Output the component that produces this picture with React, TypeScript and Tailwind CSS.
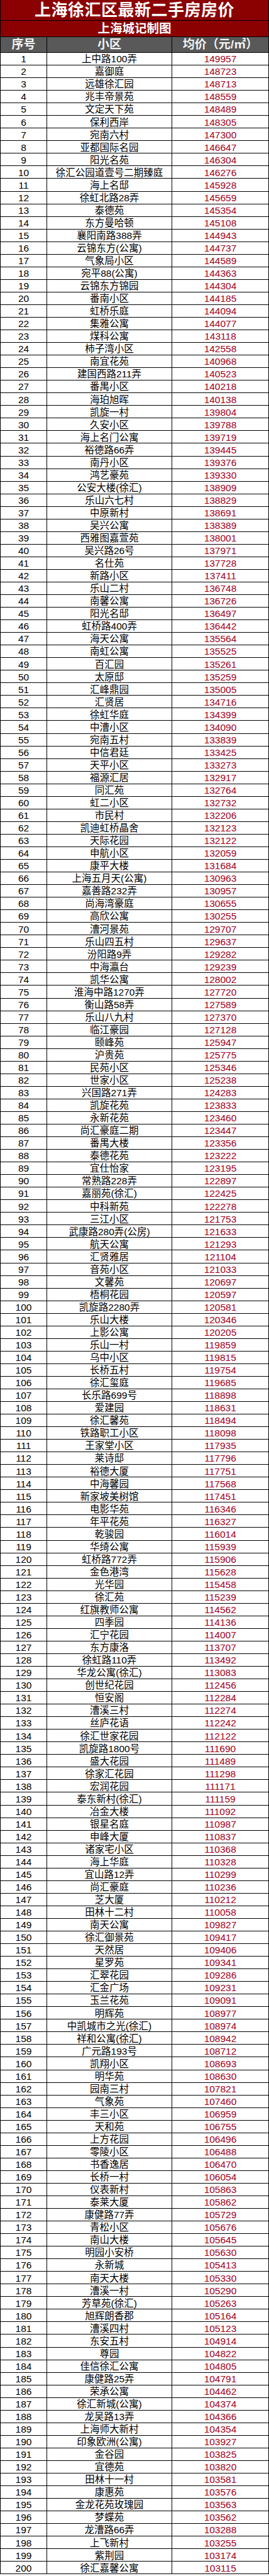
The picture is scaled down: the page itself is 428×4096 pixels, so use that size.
const RAW = `上中路100弄|149957
嘉御庭|148723
远雄徐汇园|148713
兆丰帝景苑|148559
文定天下苑|148489
保利西岸|148305
宛南六村|147300
亚都国际名园|146647
阳光名苑|146304
徐汇公园道壹号二期臻庭|146276
海上名邸|145928
徐虹北路28弄|145659
泰德苑|145354
东方曼哈顿|145108
襄阳南路388弄|144943
云锦东方(公寓)|144737
气象局小区|144589
宛平88(公寓)|144363
云锦东方锦园|144304
番南小区|144185
虹桥乐庭|144094
集雅公寓|144077
煤科公寓|143118
柿子湾小区|142558
南宜花苑|140968
建国西路211弄|140523
番禺小区|140218
海珀旭晖|140138
凯旋一村|139804
久安小区|139788
海上名门公寓|139719
裕德路66弄|139445
南丹小区|139376
鸿艺豪苑|139330
公安大楼(徐汇)|138909
乐山六七村|138829
中原新村|138691
吴兴公寓|138389
西雅图嘉萱苑|138001
吴兴路26号|137971
名仕苑|137728
新路小区|137411
乐山二村|136748
南馨公寓|136726
阳光名邸|136497
虹桥路400弄|136442
海天公寓|135564
南虹公寓|135525
百汇园|135261
太原邸|135259
汇峰鼎园|135005
汇贤居|134716
徐虹华庭|134399
中漕小区|134090
宛南五村|133839
中信君廷|133425
天平小区|133273
福源汇居|132917
同汇苑|132764
虹二小区|132732
市民村|132206
凯迪虹桥晶舍|132123
天际花园|132122
申航小区|132059
康平大楼|131684
上海五月天(公寓)|130963
嘉善路232弄|130957
尚海湾豪庭|130655
高欣公寓|130255
漕河景苑|129707
乐山四五村|129637
汾阳路9弄|129282
中海瀛台|129239
凯华公寓|128002
淮海中路1270弄|127720
衡山路58弄|127589
乐山八九村|127370
临江豪园|127128
颐峰苑|125947
沪贵苑|125775
民苑小区|125346
世家小区|125238
兴国路271弄|124283
凯旋花苑|123833
永新花苑|123460
尚汇豪庭二期|123447
番禺大楼|123356
泰德花苑|123222
宜仕怡家|123195
常熟路228弄|122897
嘉丽苑(徐汇)|122425
中科新苑|122278
三江小区|121753
武康路280弄(公房)|121633
航天公寓|121293
汇贤雅居|121104
音苑小区|121033
文馨苑|120697
梧桐花园|120597
凯旋路2280弄|120581
乐山大楼|120346
上影公寓|120205
乐山一村|119859
乌中小区|119815
长桥五村|119754
徐汇玺庭|119685
长乐路699号|118898
爱建园|118631
徐汇馨苑|118494
铁路职工小区|118098
王家堂小区|117935
莱诗邸|117796
裕德大厦|117751
中海馨园|117568
新家坡美树馆|117451
电影华苑|116346
年平花苑|116327
乾骏园|116014
华绮公寓|115939
虹桥路772弄|115906
金色港湾|115628
光华园|115458
徐汇苑|115239
红旗教师公寓|114562
四季园|114136
汇宁花园|114007
东方康洛|113707
徐虹路110弄|113492
华龙公寓(徐汇)|113083
创世纪花园|112456
恒安阁|112284
漕溪三村|112274
丝庐花语|112242
徐汇世家花园|112122
凯旋路1800号|111690
盛大花园|111489
徐家汇花园|111298
宏润花园|111171
泰东新村(徐汇)|111159
冶金大楼|111092
银星名庭|110987
申峰大厦|110837
诸家宅小区|110368
海上华庭|110328
宜山路12弄|110299
尚汇豪庭|110236
芝大厦|110212
田林十二村|110058
南天公寓|109827
徐汇御景苑|109417
天然居|109406
星罗苑|109341
汇翠花园|109286
汇金广场|109231
玉兰花苑|109091
明辉苑|108977
中凯城市之光(徐汇)|108974
祥和公寓(徐汇)|108942
广元路193号|108712
凯翔小区|108693
明华苑|108630
园南三村|107821
气象苑|107460
丰三小区|106959
天和苑|106755
上方花园|106496
零陵小区|106488
书香逸居|106470
长桥一村|106054
仪表新村|105863
泰莱大厦|105862
康健路77弄|105729
青松小区|105676
南山大楼|105645
明园小安桥|105630
永新城|105413
南天大楼|105330
漕溪一村|105290
芳草苑(徐汇)|105263
旭辉朗香郡|105164
漕溪四村|105123
东安五村|104914
尊园|104822
佳信徐汇公寓|104805
康健路25弄|104791
荣承公寓|104462
徐汇新城(公寓)|104374
龙吴路13弄|104366
上海师大新村|104354
印象欧洲(公寓)|103927
金谷园|103825
宜德苑|103820
田林十一村|103581
康惠苑|103576
金龙花苑玫瑰园|103563
梦蝶苑|103562
龙漕路66弄|103288
上飞新村|103255
紫荆园|103174
徐汇嘉馨公寓|103115`

const rows = RAW.split("\n").map((line, i) => {
  const [name, price] = line.split("|")
  return { no: i + 1, name, price }
})

export default function App() {
  return (
    <div
      className="w-[428px] bg-white text-black"
      style={{ fontFamily: '"Liberation Sans", "Noto Sans CJK SC", sans-serif' }}
    >
      <div className="border-x border-black">
        <div className="h-[33px] bg-[#8b0000] border-b border-black flex items-center justify-center text-white text-[26px] font-bold leading-none tracking-[0.5px]">
          上海徐汇区最新二手房房价
        </div>
        <div className="h-[25.5px] bg-[#8b0000] border-b border-black flex items-center justify-center text-white text-[19.5px] font-bold leading-none">
          上海城记制图
        </div>
        <div className="h-[25.5px] bg-[#595959] border-b border-black grid grid-cols-[74px_199px_1fr] text-[#f2f2f2] text-[19px] font-bold leading-none">
          <div className="border-r border-black flex items-center justify-center">序号</div>
          <div className="border-r border-black flex items-center justify-center">小区</div>
          <div className="flex items-center justify-center">均价（元/㎡）</div>
        </div>
        {rows.map((r) => (
          <div
            key={r.no}
            className="h-[20.06px] border-b border-black grid grid-cols-[74px_199px_1fr] text-[15.5px] leading-none"
          >
            <div className="border-r border-black flex items-center justify-center pt-[1px]">{r.no}</div>
            <div className="border-r border-black flex items-center justify-center pt-[1px] whitespace-nowrap">{r.name}</div>
            <div className="flex items-center justify-center pt-[1px] text-[#a3001b]">{r.price}</div>
          </div>
        ))}
      </div>
    </div>
  )
}
